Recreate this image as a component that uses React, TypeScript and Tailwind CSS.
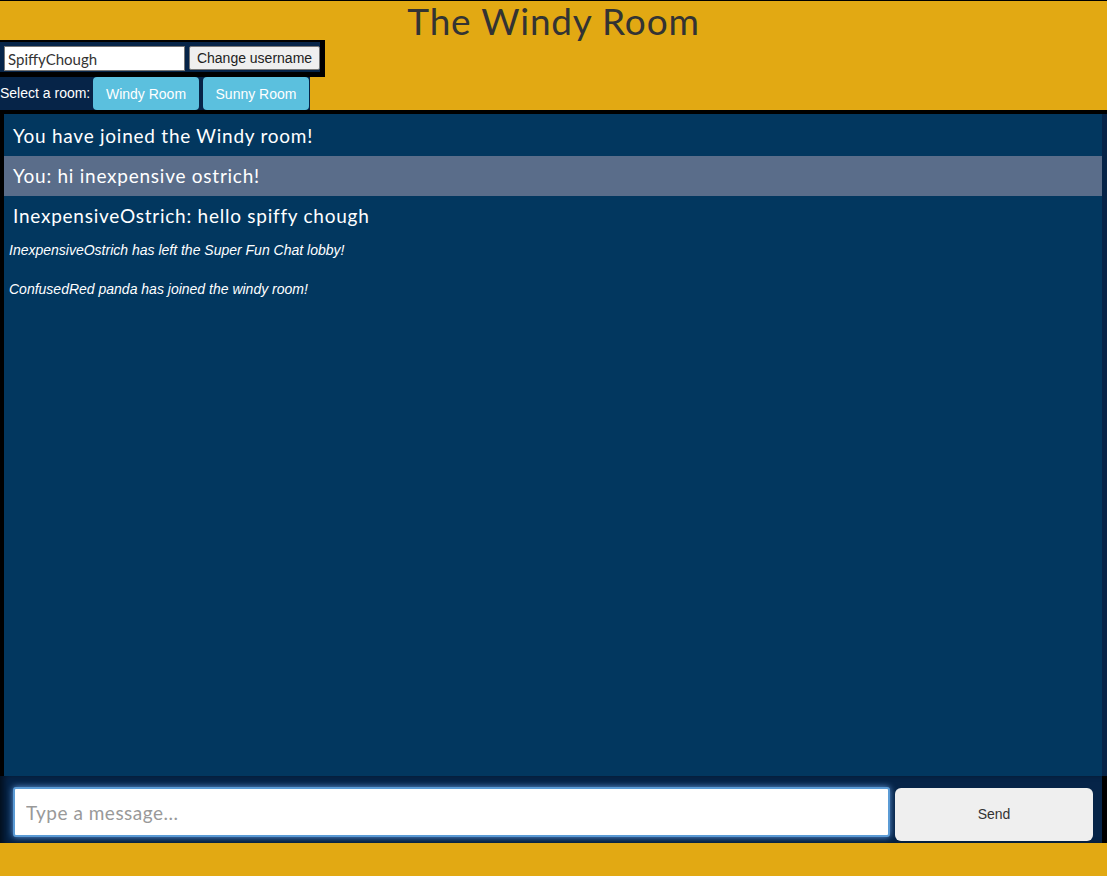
import React from "react";

const messages = [
  { text: "You have joined the Windy room!", mine: false },
  { text: "You: hi inexpensive ostrich!", mine: true },
  { text: "InexpensiveOstrich: hello spiffy chough", mine: false },
];

const notices = [
  "InexpensiveOstrich has left the Super Fun Chat lobby!",
  "ConfusedRed panda has joined the windy room!",
];

const rounded = { fontFamily: "Lato, 'Noto Sans', sans-serif" };
const arial = { fontFamily: "'Liberation Sans', Arial, sans-serif" };

export default function App() {
  return (
    <div className="h-[876px] bg-[#e2a913] border-t border-black flex flex-col overflow-hidden">
      <h1
        className="h-[39px] text-center text-[37px] leading-[40px] text-[#333] tracking-[0.8px]"
        style={rounded}
      >
        The Windy Room
      </h1>

      {/* username */}
      <div className="w-[325px] h-[37px] bg-black pr-[5px] pt-[2px] pb-[5px]">
        <div className="h-full bg-[#062448] flex items-start gap-1 pl-1 pt-1">
          <input
            className="w-[181px] h-[25px] bg-white border border-[#767676] px-[3px] text-[15px] text-[#333] outline-none"
            style={rounded}
            defaultValue="SpiffyChough"
          />
          <button
            className="w-[131px] h-[24px] px-0 whitespace-nowrap bg-[#efefef] border border-[#767676] rounded-[2px] text-[14px] text-[#222]"
            style={arial}
          >
            Change username
          </button>
        </div>
      </div>

      {/* room selector */}
      <div className="w-[310px] h-[33px] bg-[#062448] flex items-center" style={arial}>
        <span className="text-white text-[14px] w-[93px] whitespace-nowrap">Select a room:</span>
        <div className="flex gap-1 h-full">
          <button className="w-[106px] h-full bg-[#5bc0de] rounded-[4px] text-white text-[14px] pt-[1px]">
            Windy Room
          </button>
          <button className="w-[106px] h-full bg-[#5bc0de] rounded-[4px] text-white text-[14px] pt-[1px]">
            Sunny Room
          </button>
        </div>
      </div>

      {/* chat */}
      <div className="flex-1 flex bg-[#062448] border-t-4 border-l-4 border-black min-h-0">
        <div className="flex-1 mr-[5px] bg-[#02375f] pt-[2px]">
          {messages.map((m) => (
            <div
              key={m.text}
              className={`h-[40px] flex items-center pl-[9px] text-[19px] text-white tracking-[0.75px] ${
                m.mine ? "bg-[#5a6d8a]" : ""
              }`}
              style={rounded}
            >
              {m.text}
            </div>
          ))}
          <div className="pt-[4px] pl-[5px] flex flex-col gap-[18px]" style={arial}>
            {notices.map((n) => (
              <p key={n} className="italic text-white text-[14px] leading-[21px]">
                {n}
              </p>
            ))}
          </div>
        </div>
      </div>

      {/* composer */}
      <div className="h-[67px] bg-[#062448] flex items-start pl-[13px] pt-[11px] gap-[5px] shadow-[inset_6px_0_6px_-2px_rgba(0,0,0,0.6)] border-r-[5px] border-black">
        <input
          className="w-[877px] h-[50px] bg-white border-2 border-[#5b9bd5] rounded-[3px] px-[11px] text-[19px] text-[#333] outline-none shadow-[0_0_6px_rgba(120,180,255,0.8)] placeholder:text-[#999] tracking-[0.5px]"
          style={rounded}
          placeholder="Type a message..."
        />
        <button
          className="w-[198px] h-[53px] mt-[1px] bg-[#efefef] rounded-[6px] text-[14px] text-[#333]"
          style={arial}
        >
          Send
        </button>
      </div>

      <div className="h-[33px] bg-[#e2a913]" />
    </div>
  );
}
